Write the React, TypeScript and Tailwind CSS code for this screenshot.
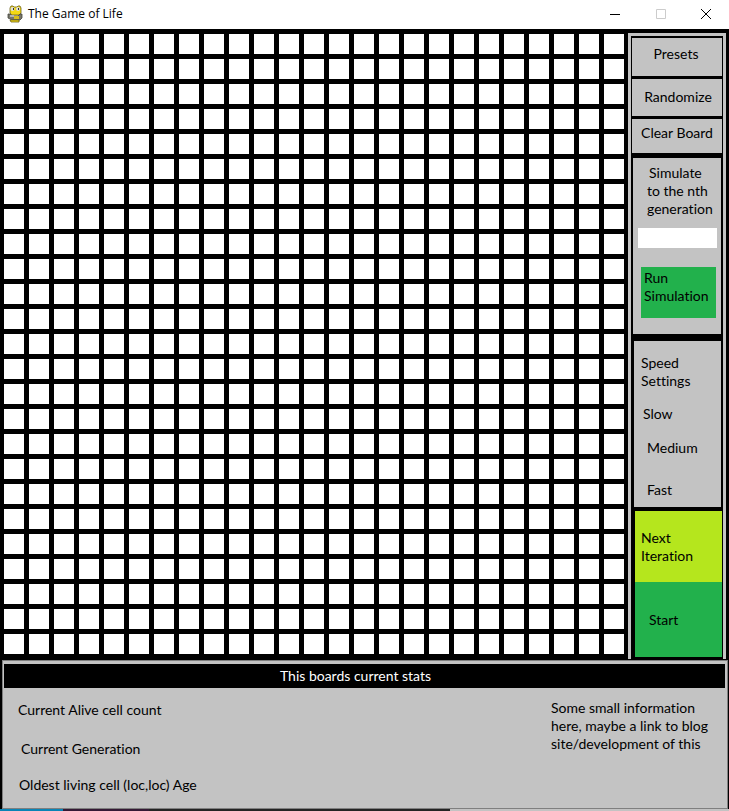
import { useState } from 'react';

const SIZE = 25;

function AppIcon() {
  return (
    <svg width="16" height="18" viewBox="0 0 16 18" aria-hidden="true">
      <path d="M4 1h2l1 1h3l1-1h2l1 2v5l-2 2H5L3 8V3z" fill="#f5d914" stroke="#6b5f18" strokeWidth=".8" />
      <circle cx="5.5" cy="4" r="2" fill="#dcdcdc" />
      <circle cx="11" cy="4" r="2" fill="#dcdcdc" />
      <path d="M6 3h1v2H6zM11 3h1v2h-1z" fill="#333" />
      <path d="M1 9h2l2 2h6l2-2h2v4l-2 2H5l-4-2z" fill="#77776c" stroke="#44443c" strokeWidth=".8" />
      <path d="M3 10h4v2H3z" fill="#b5b5b5" />
      <path d="M7 11h5v3H7z" fill="#d8bd1c" />
      <path d="M3 15h9v2H4z" fill="#f5d914" stroke="#6b5f18" strokeWidth=".8" />
    </svg>
  );
}

function TitleBar() {
  return (
    <header className="flex h-[29px] items-center bg-white pb-[2px] pl-[7px] text-xs text-black [font-family:'Open_Sans','Noto_Sans',sans-serif]">
      <AppIcon />
      <h1 className="ml-[5px] flex-1">The Game of Life</h1>
      <button type="button" aria-label="Minimize" className="flex h-full w-[46px] items-center justify-center">
        <svg width="10" height="10" viewBox="0 0 10 10" aria-hidden="true">
          <path d="M0 5.5h10" stroke="#000" />
        </svg>
      </button>
      <button type="button" aria-label="Maximize" disabled className="flex h-full w-[45px] items-center justify-center">
        <svg width="10" height="10" viewBox="0 0 10 10" aria-hidden="true">
          <path d="M.5.5h9v9h-9z" fill="none" stroke="#ccc" />
        </svg>
      </button>
      <button type="button" aria-label="Close" className="flex h-full w-[46px] items-center justify-center">
        <svg width="10" height="10" viewBox="0 0 10 10" aria-hidden="true">
          <path d="M0 0l10 10M10 0L0 10" stroke="#000" />
        </svg>
      </button>
    </header>
  );
}

function Board() {
  const [alive, setAlive] = useState<boolean[]>(() => Array(SIZE * SIZE).fill(false));
  const toggle = (index: number) => setAlive((cells) => cells.map((cell, i) => (i === index ? !cell : cell)));

  return (
    <section
      aria-label="Board"
      className="grid flex-1 grid-cols-[repeat(25,minmax(0,1fr))] content-start gap-[5px] px-1 pt-[5px]"
    >
      {alive.map((cell, i) => (
        <button
          key={i}
          type="button"
          aria-label={`Row ${Math.floor(i / SIZE) + 1}, column ${(i % SIZE) + 1}`}
          aria-pressed={cell}
          onClick={() => toggle(i)}
          className={cell ? 'aspect-square bg-black' : 'aspect-square bg-white'}
        />
      ))}
    </section>
  );
}

function Sidebar() {
  return (
    <aside className="mt-1 mr-[3px] w-[98px] border-x-[3px] border-t-[3px] border-[#c3c3c3] bg-black">
      <div className="flex flex-col px-px pt-[2px]">
        <button type="button" className="mb-[3px] h-[38px] bg-[#c3c3c3] pr-[2px] pb-[6px]">Presets</button>
        <button type="button" className="mb-[3px] h-[37px] bg-[#c3c3c3] pb-[2px] pl-[2px]">Randomize</button>
        <button type="button" className="mb-[5px] h-[34px] bg-[#c3c3c3] pb-[6px]">Clear Board</button>
      </div>

      <form
        onSubmit={(e) => e.preventDefault()}
        className="mr-[2px] mb-[7px] ml-[2px] flex h-[176px] flex-col bg-[#c3c3c3] pt-[6px] pr-1 pl-[5px]"
      >
        <label htmlFor="generation" className="pl-[9px]">
          <span className="block pl-[2px]">Simulate</span>
          to the nth generation
        </label>
        <input id="generation" type="text" className="mt-[10px] h-5 w-full bg-white px-1 outline-none" />
        <button type="submit" className="mt-[19px] mr-px ml-[3px] flex h-[51px] bg-[#22b14c] px-[3px] pt-[2px] text-left">
          Run Simulation
        </button>
      </form>

      <section className="mr-[2px] mb-1 ml-[3px] flex h-[166px] flex-col items-start bg-[#c3c3c3] pt-[13px] pl-[7px]">
        <h2 className="w-[60px]">Speed Settings</h2>
        <button type="button" className="mt-[15px] ml-[2px]">Slow</button>
        <button type="button" className="mt-4 ml-[6px]">Medium</button>
        <button type="button" className="mt-6 ml-[6px]">Fast</button>
      </section>

      <div className="flex flex-col pr-px pb-[2px] pl-1">
        <button type="button" className="h-[71px] bg-[#b5e61d] pr-5 pl-[6px] text-left">Next Iteration</button>
        <button type="button" className="h-[75px] bg-[#22b14c] pl-[14px] text-left">Start</button>
      </div>
    </aside>
  );
}

function Stats() {
  return (
    <section className="mr-px ml-[2px] border border-[#7f7f7f] bg-[#c3c3c3] pt-[3px]">
      <h2 className="mr-[2px] ml-px h-6 bg-black pr-[18px] text-center leading-6 text-white">
        This boards current stats
      </h2>
      <div className="flex h-[120px] justify-between pr-3 pl-[15px]">
        <ul className="pt-[13px]">
          <li>Current Alive cell count</li>
          <li className="mt-[21px] ml-[3px]">Current Generation</li>
          <li className="mt-[18px] ml-px">Oldest living cell (loc,loc) Age</li>
        </ul>
        <p className="w-[164px] pt-[11px]">
          Some small information here, maybe a link to blog site/development of this
        </p>
      </div>
    </section>
  );
}

export default function App() {
  return (
    <main className="bg-black text-sm leading-[18px] text-black [font-family:Lato,'Open_Sans',sans-serif] [font-variant-ligatures:none]">
      <TitleBar />
      <div className="flex">
        <Board />
        <Sidebar />
      </div>
      <div className="pt-px">
        <Stats />
      </div>
      <div className="flex h-[2px]" aria-hidden="true">
        <div className="w-[63px] bg-[#0a84b5]" />
        <div className="w-[86px] bg-[#351a35]" />
        <div className="w-[301px] bg-[#242424]" />
        <div className="flex-1 bg-[#c3c3c3]" />
      </div>
    </main>
  );
}
